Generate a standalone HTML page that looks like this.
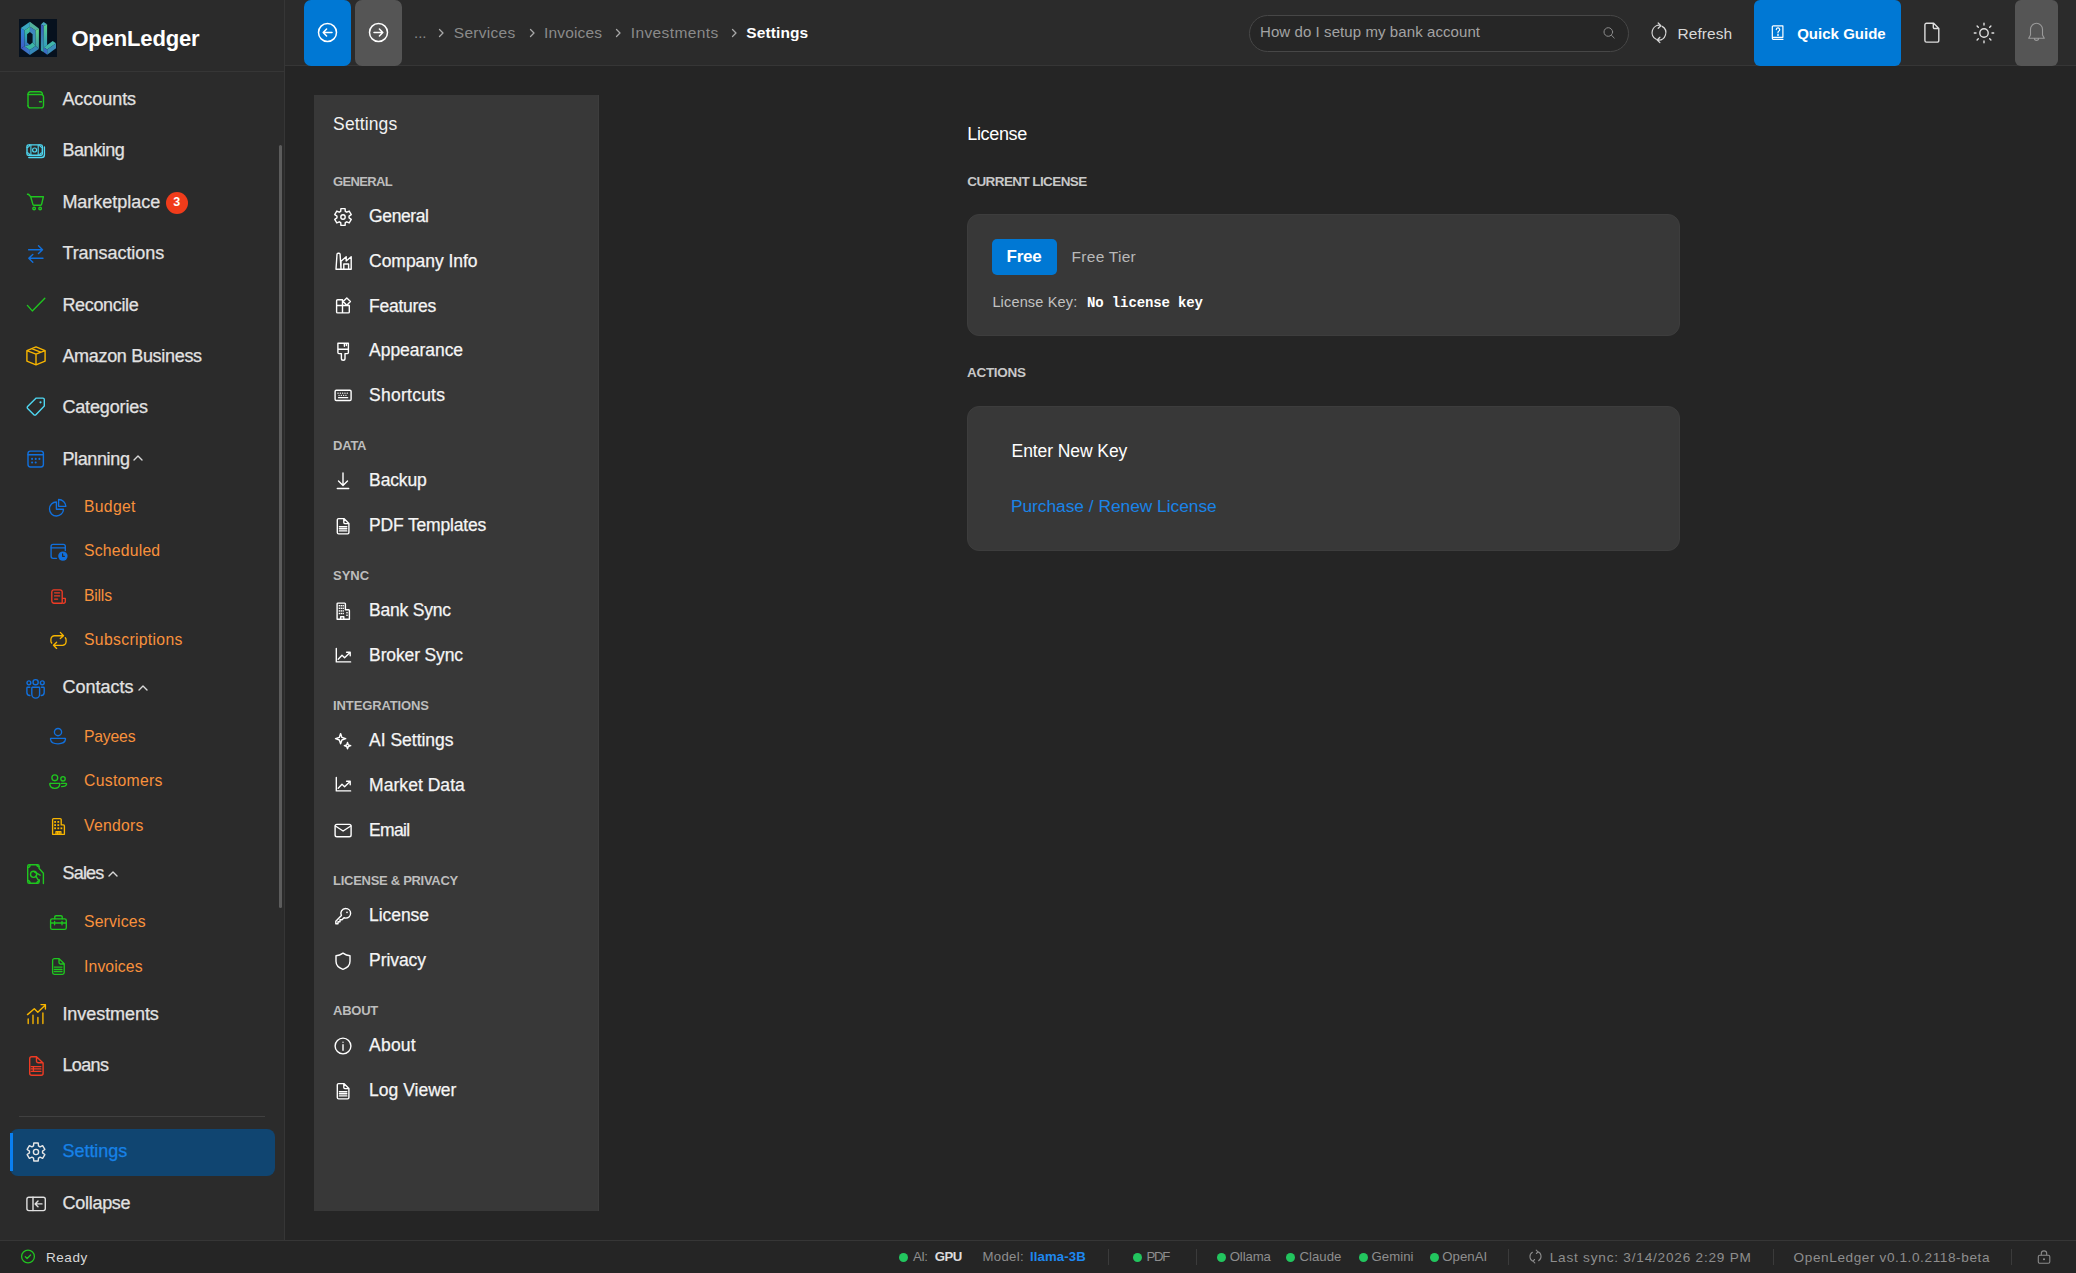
<!DOCTYPE html>
<html><head><meta charset="utf-8"><title>OpenLedger - License</title>
<style>
html,body{margin:0;padding:0;}
body{width:2076px;height:1273px;overflow:hidden;background:#252525;font-family:"Liberation Sans", sans-serif;position:relative;}
.t{position:absolute;white-space:nowrap;}
.r{position:absolute;}
.ic{position:absolute;overflow:visible;}
</style></head><body>
<div class="r" style="left:0px;top:0px;width:284px;height:1240px;background:#2b2b2b;"></div>
<div class="r" style="left:284px;top:0px;width:1px;height:1240px;background:#363636;"></div>
<div class="r" style="left:0px;top:71px;width:284px;height:1px;background:#363636;"></div>
<div class="r" style="left:285px;top:0px;width:1791px;height:65px;background:#2b2b2b;"></div>
<div class="r" style="left:285px;top:65px;width:1791px;height:1px;background:#363636;"></div>
<div class="r" style="left:0px;top:1240px;width:2076px;height:1px;background:#363636;"></div>
<svg class="ic" style="left:19px;top:19px" width="38" height="38" viewBox="0 0 38 38">
<defs>
<linearGradient id="gL1" x1="0" y1="0" x2="0" y2="1"><stop offset="0" stop-color="#2f86d8"/><stop offset="1" stop-color="#3f5ec6"/></linearGradient>
<linearGradient id="gL2" x1="0" y1="0" x2="0" y2="1"><stop offset="0" stop-color="#48c894"/><stop offset="0.5" stop-color="#2fa6b0"/><stop offset="1" stop-color="#3470c4"/></linearGradient>
<linearGradient id="gR1" x1="0" y1="0" x2="0" y2="1"><stop offset="0" stop-color="#62d488"/><stop offset="1" stop-color="#3a98a8"/></linearGradient>
<linearGradient id="gR2" x1="0" y1="0" x2="0" y2="1"><stop offset="0" stop-color="#3f7ec4"/><stop offset="1" stop-color="#3aa0ae"/></linearGradient>
<linearGradient id="gB1" x1="0" y1="0" x2="1" y2="0"><stop offset="0" stop-color="#3f5cc4"/><stop offset="1" stop-color="#3a7cc8"/></linearGradient>
<linearGradient id="gLv1" x1="0" y1="0" x2="0" y2="1"><stop offset="0" stop-color="#3d58c0"/><stop offset="1" stop-color="#35a8a8"/></linearGradient>
<linearGradient id="gLv2" x1="0" y1="0" x2="0" y2="1"><stop offset="0" stop-color="#5cd48a"/><stop offset="1" stop-color="#2e9ac0"/></linearGradient>
</defs>
<rect width="38" height="38" fill="#06111e"/>
<path d="M1.9 9.1 L10.9 2.8 L10.9 7.8 L5.5 11.6 L1.9 9.1 Z" fill="#3aa6c0"/>
<path d="M10.9 2.8 L19.9 9.6 L16.6 11.6 L10.9 7.8 Z" fill="#52b09c"/>
<path d="M1.9 9.1 L5.5 11.6 V27.2 L1.9 29.4 Z" fill="url(#gL1)"/>
<path d="M5.5 11.6 L10.9 7.8 V13.1 L8.1 15.2 V23.6 L10.9 25.7 L5.5 27.2 Z" fill="url(#gL2)"/>
<path d="M10.9 7.8 L16.6 11.6 V27 L13.6 23.6 V15.2 L10.9 13.1 Z" fill="url(#gR2)"/>
<path d="M16.6 11.6 L19.9 9.6 V29.9 L16.6 27 Z" fill="url(#gR1)"/>
<path d="M1.9 29.4 L5.5 27.2 L10.9 31 V36 Z" fill="url(#gB1)"/>
<path d="M5.5 27.2 L10.9 25.7 L13.6 23.6 L16.6 27 L10.9 31 Z" fill="#3cb6a6"/>
<path d="M10.9 31 L16.6 27 L19.9 29.9 L10.9 36 Z" fill="#3588b8"/>
<path d="M21.9 5.5 L24.6 2.9 L28.1 5.2 L24.8 7 Z" fill="#48a8c0"/>
<path d="M21.9 5.5 L24.8 7 V33.2 L21.9 31.5 Z" fill="url(#gLv1)"/>
<path d="M24.8 7 L28.1 5.2 V26.3 L24.8 28.6 Z" fill="url(#gLv2)"/>
<path d="M24.8 28.6 L33.7 22.1 L37 24.3 L28.2 30.6 Z" fill="#40b6aa"/>
<path d="M24.8 28.6 L28.2 30.6 V35.8 L24.8 33.2 Z" fill="#3a6cc4"/>
<path d="M28.2 30.6 L37 24.3 V29.3 L28.2 35.8 Z" fill="#3a8cb8"/>
</svg>
<div class="t" style="left:71.40px;top:28.00px;font-size:22px;line-height:22px;color:#ffffff;font-weight:700;letter-spacing:-0.142px;">OpenLedger</div>
<div class="t" style="left:62.40px;top:90.00px;font-size:18px;line-height:18px;color:#e2e2e2;letter-spacing:-0.046px;-webkit-text-stroke:0.25px currentColor;">Accounts</div>
<svg class="ic" style="left:22px;top:86px" width="28" height="28" viewBox="0 0 28 28" fill="none" stroke="#1fc61f" stroke-width="1.4" stroke-linecap="round" stroke-linejoin="round"><path d="M6 19.8 V8 a2.2 2.2 0 0 1 2.2-2.2 H18.2 a2.2 2.2 0 0 1 2.2 2.2 V8.5"/><path d="M6 8.5 H19.3 a2.2 2.2 0 0 1 2.2 2.2 V19.7 a2.2 2.2 0 0 1-2.2 2.2 H8.2 a2.2 2.2 0 0 1-2.2-2.2"/><path d="M17.5 15.7 H19.4"/></svg>
<div class="t" style="left:62.40px;top:141.00px;font-size:18px;line-height:18px;color:#e2e2e2;letter-spacing:-0.428px;-webkit-text-stroke:0.25px currentColor;">Banking</div>
<svg class="ic" style="left:22px;top:138px" width="28" height="28" viewBox="0 0 28 28" fill="none" stroke="#4fd8f2" stroke-width="1.4" stroke-linecap="round" stroke-linejoin="round"><rect x="5" y="6.9" width="15.3" height="10.4" rx="1.4"/><circle cx="12.6" cy="12" r="2" stroke-width="1.2"/><path d="M5 9.5 A2.5 2.5 0 0 0 7.5 6.9 M17.8 6.9 A2.5 2.5 0 0 0 20.3 9.5 M5 14.7 A2.5 2.5 0 0 1 7.5 17.3 M17.8 17.3 A2.5 2.5 0 0 1 20.3 14.7 M8.9 7 V17.2 M16.2 7 V17.2" stroke-width="1.1"/><path d="M6.8 19.5 H19.6 a2.8 2.8 0 0 0 2.8-2.8 V9"/></svg>
<div class="t" style="left:62.40px;top:193.00px;font-size:18px;line-height:18px;color:#e2e2e2;letter-spacing:-0.026px;-webkit-text-stroke:0.25px currentColor;">Marketplace</div>
<svg class="ic" style="left:22px;top:189px" width="28" height="28" viewBox="0 0 28 28" fill="none" stroke="#1fc61f" stroke-width="1.4" stroke-linecap="round" stroke-linejoin="round"><path d="M5.5 5.3 a1.5 1.5 0 0 1 1.7 0.8 L8.7 7.7 H21.4 L19.6 15.4 a1 1 0 0 1-1 0.8 H11.9 a1 1 0 0 1-1-0.8 L8.7 7.7"/><circle cx="12.1" cy="19.5" r="1.3"/><circle cx="18.1" cy="19.5" r="1.3"/></svg>
<div class="t" style="left:62.40px;top:244.00px;font-size:18px;line-height:18px;color:#e2e2e2;letter-spacing:-0.052px;-webkit-text-stroke:0.25px currentColor;">Transactions</div>
<svg class="ic" style="left:22px;top:240px" width="28" height="28" viewBox="0 0 28 28" fill="none" stroke="#1170dd" stroke-width="1.4" stroke-linecap="round" stroke-linejoin="round"><path d="M6.6 9.7 H20.5 M16.5 5.7 L20.5 9.7 L16.5 13.6 M21 18.3 H6.8 M10.8 14.4 L6.8 18.3 L10.8 22.3"/></svg>
<div class="t" style="left:62.40px;top:296.00px;font-size:18px;line-height:18px;color:#e2e2e2;letter-spacing:-0.333px;-webkit-text-stroke:0.25px currentColor;">Reconcile</div>
<svg class="ic" style="left:22px;top:291px" width="28" height="28" viewBox="0 0 28 28" fill="none" stroke="#1fc61f" stroke-width="1.4" stroke-linecap="round" stroke-linejoin="round"><path d="M5.4 14.4 L10.3 19.9 L22.8 7.2"/></svg>
<div class="t" style="left:62.40px;top:347.00px;font-size:18px;line-height:18px;color:#e2e2e2;letter-spacing:-0.314px;-webkit-text-stroke:0.25px currentColor;">Amazon Business</div>
<svg class="ic" style="left:22px;top:342px" width="28" height="28" viewBox="0 0 28 28" fill="none" stroke="#f7b500" stroke-width="1.4" stroke-linecap="round" stroke-linejoin="round"><path d="M14 4.9 L23.1 8.6 V19.1 L14 22.9 L4.9 19.1 V8.6 Z M4.9 8.6 L14 12.1 L23.1 8.6 M14 12.1 V22.9 M9.6 6.7 L18.7 10.1"/></svg>
<div class="t" style="left:62.40px;top:398.00px;font-size:18px;line-height:18px;color:#e2e2e2;letter-spacing:-0.148px;-webkit-text-stroke:0.25px currentColor;">Categories</div>
<svg class="ic" style="left:22px;top:393px" width="28" height="28" viewBox="0 0 28 28" fill="none" stroke="#4fd8f2" stroke-width="1.4" stroke-linecap="round" stroke-linejoin="round"><path d="M14.2 5.1 H20.9 a1.4 1.4 0 0 1 1.4 1.4 V13.1 L13.9 21.7 a1.4 1.4 0 0 1-2 0 L5.6 15.5 a1.4 1.4 0 0 1 0-2 Z"/><circle cx="18.5" cy="9.3" r="1.1" fill="#4fd8f2" stroke="none"/></svg>
<div class="t" style="left:62.40px;top:450.00px;font-size:18px;line-height:18px;color:#e2e2e2;letter-spacing:-0.366px;-webkit-text-stroke:0.25px currentColor;">Planning</div>
<svg class="ic" style="left:22px;top:444px" width="28" height="28" viewBox="0 0 28 28" fill="none" stroke="#1170dd" stroke-width="1.4" stroke-linecap="round" stroke-linejoin="round"><rect x="6" y="7.1" width="15.4" height="15.9" rx="2.4"/><path d="M6 10.8 H21.4"/><g stroke="none" fill="#1170dd"><circle cx="10.1" cy="14.9" r="1.05"/><circle cx="13.7" cy="14.9" r="1.05"/><circle cx="17.4" cy="14.9" r="1.05"/><circle cx="10.1" cy="18.5" r="1.05"/><circle cx="13.7" cy="18.5" r="1.05"/></g></svg>
<div class="t" style="left:84.00px;top:499.00px;font-size:15.75px;line-height:15.75px;color:#f8913c;letter-spacing:0.294px;">Budget</div>
<svg class="ic" style="left:44px;top:493px" width="28" height="28" viewBox="0 0 28 28" fill="none" stroke="#1170dd" stroke-width="1.35" stroke-linecap="round" stroke-linejoin="round"><path d="M12.4 9 A7 7 0 1 0 19.5 16.2 H12.4 Z"/><path d="M14.6 6.5 V13.3 H21.9 A7.3 7.3 0 0 0 14.6 6.5 Z"/></svg>
<div class="t" style="left:84.00px;top:543.00px;font-size:15.75px;line-height:15.75px;color:#f8913c;letter-spacing:0.21px;">Scheduled</div>
<svg class="ic" style="left:44px;top:537px" width="28" height="28" viewBox="0 0 28 28" fill="none" stroke="#1170dd" stroke-width="1.35" stroke-linecap="round" stroke-linejoin="round"><path d="M12.5 21.3 H9.1 a2 2 0 0 1-2-2 V9.3 a2 2 0 0 1 2-2 H19.3 a2 2 0 0 1 2 2 V13.6"/><path d="M7.1 10.8 H21.3"/><circle cx="18.9" cy="19.1" r="4.7" fill="#1170dd" stroke="none"/><path d="M18.6 16.9 V19.3 H20.4" stroke="#2b2b2b" stroke-width="1.2"/></svg>
<div class="t" style="left:84.00px;top:588.00px;font-size:15.75px;line-height:15.75px;color:#f8913c;letter-spacing:-0.215px;">Bills</div>
<svg class="ic" style="left:44px;top:582px" width="28" height="28" viewBox="0 0 28 28" fill="none" stroke="#ef3b24" stroke-width="1.35" stroke-linecap="round" stroke-linejoin="round"><path d="M18.2 21.2 H10 a2.2 2.2 0 0 1-2.2-2.2 V9.9 a2.1 2.1 0 0 1 2.1-2.1 H16.1 a2.1 2.1 0 0 1 2.1 2.1 Z M18.2 16.4 H21.3 V19.4 a1.8 1.8 0 0 1-1.8 1.8"/><path d="M10.6 10.8 H15.6 M10.6 13.9 H15.6 M10.6 17.1 H13.6"/></svg>
<div class="t" style="left:84.00px;top:632.00px;font-size:15.75px;line-height:15.75px;color:#f8913c;letter-spacing:0.322px;">Subscriptions</div>
<svg class="ic" style="left:44px;top:626px" width="28" height="28" viewBox="0 0 28 28" fill="none" stroke="#f7b500" stroke-width="1.35" stroke-linecap="round" stroke-linejoin="round"><path d="M16.3 6.4 L19.5 9.7 L16.3 12.6 M19.5 9.7 H10.6 a3.7 3.7 0 0 0-3.7 3.7 V14.3 a3.6 3.6 0 0 0 0.8 2.7 M12.6 16.3 L9.5 19.3 L12.6 22.4 M9.5 19.3 H18.4 a3.7 3.7 0 0 0 3.7-3.7 V14.6 a3.6 3.6 0 0 0-0.8-2.8"/></svg>
<div class="t" style="left:62.40px;top:678.00px;font-size:18px;line-height:18px;color:#e2e2e2;letter-spacing:0.021px;-webkit-text-stroke:0.25px currentColor;">Contacts</div>
<svg class="ic" style="left:22px;top:674px" width="28" height="28" viewBox="0 0 28 28" fill="none" stroke="#1170dd" stroke-width="1.4" stroke-linecap="round" stroke-linejoin="round"><circle cx="6.9" cy="8.8" r="1.9"/><circle cx="13.6" cy="8.2" r="2.6"/><circle cx="20.3" cy="8.8" r="1.9"/><path d="M10.3 13.3 H17 a0.6 0.6 0 0 1 0.6 0.6 V20.2 a3.9 3.9 0 0 1-7.8 0 V13.9 a0.6 0.6 0 0 1 0.6-0.6 Z"/><path d="M7.8 13.3 H5.6 a0.7 0.7 0 0 0-0.7 0.7 V18.4 a3.1 3.1 0 0 0 3 3.1 M19.4 13.3 H21.5 a0.7 0.7 0 0 1 0.7 0.7 V18.4 a3.1 3.1 0 0 1-3 3.1"/></svg>
<div class="t" style="left:84.00px;top:729.00px;font-size:15.75px;line-height:15.75px;color:#f8913c;letter-spacing:-0.205px;">Payees</div>
<svg class="ic" style="left:44px;top:722px" width="28" height="28" viewBox="0 0 28 28" fill="none" stroke="#1170dd" stroke-width="1.35" stroke-linecap="round" stroke-linejoin="round"><circle cx="14" cy="10.1" r="3.6"/><path d="M7.3 16.3 H20.7 a0.8 0.8 0 0 1 0.8 0.9 C21.2 19.9 18.3 21.8 14 21.8 C9.7 21.8 6.8 19.9 6.5 17.2 a0.8 0.8 0 0 1 0.8-0.9 Z"/></svg>
<div class="t" style="left:84.00px;top:773.00px;font-size:15.75px;line-height:15.75px;color:#f8913c;letter-spacing:0.294px;">Customers</div>
<svg class="ic" style="left:44px;top:767px" width="28" height="28" viewBox="0 0 28 28" fill="none" stroke="#1fc61f" stroke-width="1.35" stroke-linecap="round" stroke-linejoin="round"><circle cx="10.8" cy="10.8" r="2.9"/><path d="M6.5 16.3 H15.1 a0.7 0.7 0 0 1 0.7 0.8 C15.6 19.6 13.6 21.3 10.8 21.3 C8 21.3 6 19.6 5.8 17.1 a0.7 0.7 0 0 1 0.7-0.8 Z"/><circle cx="19" cy="11.8" r="2.2"/><path d="M17.3 16.4 H22 a0.6 0.6 0 0 1 0.6 0.7 C22.3 18.6 20.9 19.6 17.6 19.6"/></svg>
<div class="t" style="left:84.00px;top:818.00px;font-size:15.75px;line-height:15.75px;color:#f8913c;letter-spacing:0.25px;">Vendors</div>
<svg class="ic" style="left:44px;top:811px" width="28" height="28" viewBox="0 0 28 28" fill="none" stroke="#f7b500" stroke-width="1.35" stroke-linecap="round" stroke-linejoin="round"><path d="M8.6 23.3 V8.6 a1 1 0 0 1 1-1 H16.2 a1 1 0 0 1 1 1 V13.9 H19.4 a1 1 0 0 1 1 1 V23.3 Z"/><path d="M12 23.3 V20.6 H16.9 V23.3 M13.6 20.9 V23.2 M15.2 20.9 V23.2"/><g stroke="none" fill="#f7b500"><rect x="10.2" y="10" width="1.8" height="1.8"/><rect x="13.4" y="10" width="1.8" height="1.8"/><rect x="10.2" y="13.2" width="1.8" height="1.8"/><rect x="13.4" y="13.2" width="1.8" height="1.8"/><rect x="10.2" y="16.4" width="1.8" height="1.8"/><rect x="13.4" y="16.4" width="1.8" height="1.8"/><rect x="16.5" y="16.4" width="1.8" height="1.8"/></g></svg>
<div class="t" style="left:62.40px;top:864.00px;font-size:18px;line-height:18px;color:#e2e2e2;letter-spacing:-0.761px;-webkit-text-stroke:0.25px currentColor;">Sales</div>
<svg class="ic" style="left:22px;top:860px" width="28" height="28" viewBox="0 0 28 28" fill="none" stroke="#1fc61f" stroke-width="1.4" stroke-linecap="round" stroke-linejoin="round"><path d="M17.1 8.6 V6.2 a1.5 1.5 0 0 0-1.5-1.5 H7.2 a1.5 1.5 0 0 0-1.5 1.5 V21.8 a1.5 1.5 0 0 0 1.5 1.5 H15.6 a1.5 1.5 0 0 0 1.5-1.5 V20"/><path d="M5.7 7.6 a2.2 2.2 0 0 0 2.3-2.2 M14.8 4.7 a2.2 2.2 0 0 0 2.3 2.2 M5.7 20.5 a2.2 2.2 0 0 1 2.3 2.5 M14.8 23.3 a2.2 2.2 0 0 1 2.3-2.3"/><circle cx="11.6" cy="14.3" r="3.1"/><path d="M17.6 9 L21.4 13.3 V23.6 M12.3 11.9 L18.1 15.2 M13.9 16.1 L16 19.6 L17.3 20.2"/></svg>
<div class="t" style="left:84.00px;top:914.00px;font-size:15.75px;line-height:15.75px;color:#f8913c;letter-spacing:0.171px;">Services</div>
<svg class="ic" style="left:44px;top:908px" width="28" height="28" viewBox="0 0 28 28" fill="none" stroke="#1fc61f" stroke-width="1.35" stroke-linecap="round" stroke-linejoin="round"><rect x="6.6" y="10.8" width="15.7" height="10.5" rx="1.6"/><path d="M10.8 10.8 V8.9 a1.2 1.2 0 0 1 1.2-1.2 H17 a1.2 1.2 0 0 1 1.2 1.2 V10.8 M6.6 15 H22.3 M10.6 13.4 V16.7 M18 13.4 V16.7"/></svg>
<div class="t" style="left:84.00px;top:959.00px;font-size:15.75px;line-height:15.75px;color:#f8913c;letter-spacing:0.12px;">Invoices</div>
<svg class="ic" style="left:44px;top:952px" width="28" height="28" viewBox="0 0 28 28" fill="none" stroke="#1fc61f" stroke-width="1.35" stroke-linecap="round" stroke-linejoin="round"><path d="M15.1 6.6 H10.4 a1.8 1.8 0 0 0-1.8 1.8 V20.6 a1.8 1.8 0 0 0 1.8 1.8 H18.4 a1.8 1.8 0 0 0 1.8-1.8 V11.8 Z M15 6.7 V10.6 a1.4 1.4 0 0 0 1.4 1.4 H20.1"/><path d="M10.3 15.1 H18 M10.3 17.3 H18 M10.3 19.5 H18"/></svg>
<div class="t" style="left:62.40px;top:1005.00px;font-size:18px;line-height:18px;color:#e2e2e2;letter-spacing:-0.056px;-webkit-text-stroke:0.25px currentColor;">Investments</div>
<svg class="ic" style="left:22px;top:1000px" width="28" height="28" viewBox="0 0 28 28" fill="none" stroke="#f7b500" stroke-width="1.4" stroke-linecap="round" stroke-linejoin="round"><path d="M6.2 19 V23.6 M11 15.2 V23.6 M15.9 17.4 V23.6 M20.9 13 V23.6 M5.5 14.6 L12.3 8.7 L15.8 12.2 L22.3 6 M19 4.6 H23.4 V9"/></svg>
<div class="t" style="left:62.40px;top:1056.00px;font-size:18px;line-height:18px;color:#e2e2e2;letter-spacing:-0.612px;-webkit-text-stroke:0.25px currentColor;">Loans</div>
<svg class="ic" style="left:22px;top:1052px" width="28" height="28" viewBox="0 0 28 28" fill="none" stroke="#ef3b24" stroke-width="1.4" stroke-linecap="round" stroke-linejoin="round"><path d="M14.5 4.7 H9.7 a2 2 0 0 0-2 2 V21.3 a2 2 0 0 0 2 2 H19.1 a2 2 0 0 0 2-2 V11 Z M14.5 4.8 V9 a1.8 1.8 0 0 0 1.8 1.8 H21"/><path d="M9.2 14.6 H18.9 M9.2 16.9 H18.9 M9.2 19.4 H18.9 M11.4 14.6 V19.4" stroke-width="1.3"/></svg>
<svg class="ic" style="left:132px;top:452px" width="12" height="12" viewBox="0 0 12 12" fill="none" stroke="#d9d9d9" stroke-width="1.4" stroke-linecap="round" stroke-linejoin="round"><path d="M2 8 L6 4 L10 8"/></svg>
<svg class="ic" style="left:137px;top:682px" width="12" height="12" viewBox="0 0 12 12" fill="none" stroke="#d9d9d9" stroke-width="1.4" stroke-linecap="round" stroke-linejoin="round"><path d="M2 8 L6 4 L10 8"/></svg>
<svg class="ic" style="left:107px;top:868px" width="12" height="12" viewBox="0 0 12 12" fill="none" stroke="#d9d9d9" stroke-width="1.4" stroke-linecap="round" stroke-linejoin="round"><path d="M2 8 L6 4 L10 8"/></svg>
<div class="r" style="left:166px;top:192px;width:22px;height:22px;border-radius:11px;background:#f03c1b;"></div>
<div class="t" style="left:173.20px;top:196.00px;font-size:12.5px;line-height:12.5px;color:#ffffff;font-weight:700;">3</div>
<div class="r" style="left:279px;top:145px;width:3px;height:763px;background:#5c5c5c;border-radius:2px;"></div>
<div class="r" style="left:19px;top:1116px;width:246px;height:1px;background:#404040;"></div>
<div class="r" style="left:10px;top:1129px;width:264.5px;height:47px;background:#104571;border-radius:8px;"></div>
<div class="r" style="left:10px;top:1133px;width:3px;height:38px;background:#0a7ff0;"></div>
<svg class="ic" style="left:22px;top:1138px" width="28" height="28" viewBox="0 0 28 28" fill="none" stroke="#e6e6e6" stroke-width="1.4" stroke-linecap="round" stroke-linejoin="round"><path d="M11.53 7.88 L11.77 5.07 L16.23 5.07 L16.47 7.88 L18.06 8.80 L20.62 7.61 L22.84 11.46 L20.54 13.08 L20.54 14.92 L22.84 16.54 L20.62 20.39 L18.06 19.20 L16.47 20.12 L16.23 22.93 L11.77 22.93 L11.53 20.12 L9.94 19.20 L7.38 20.39 L5.16 16.54 L7.46 14.92 L7.46 13.08 L5.16 11.46 L7.38 7.61 L9.94 8.80 Z"/><circle cx="14" cy="14" r="2.6"/></svg>
<div class="t" style="left:62.60px;top:1142.00px;font-size:18px;line-height:18px;color:#1782e8;letter-spacing:-0.061px;-webkit-text-stroke:0.25px currentColor;">Settings</div>
<svg class="ic" style="left:22px;top:1190px" width="28" height="28" viewBox="0 0 28 28" fill="none" stroke="#e0e0e0" stroke-width="1.4" stroke-linecap="round" stroke-linejoin="round"><rect x="4.9" y="7.3" width="18.4" height="13.3" rx="2"/><path d="M11 7.3 V20.6 M20 13.9 H13.3 M16 11 L13.1 13.9 L16 16.8"/></svg>
<div class="t" style="left:62.60px;top:1194.00px;font-size:18px;line-height:18px;color:#e2e2e2;letter-spacing:-0.295px;-webkit-text-stroke:0.25px currentColor;">Collapse</div>
<div class="r" style="left:304px;top:0px;width:47px;height:66px;background:#0078d4;border-radius:7px;"></div>
<div class="r" style="left:355px;top:0px;width:47px;height:66px;background:#555555;border-radius:7px;"></div>
<svg class="ic" style="left:317px;top:22px" width="21" height="21" viewBox="0 0 21 21" fill="none" stroke="#ffffff" stroke-width="1.5" stroke-linecap="round" stroke-linejoin="round"><circle cx="10.5" cy="10.5" r="9"/><path d="M15 10.5 H6.3 M9.6 7 L6.2 10.5 L9.6 14"/></svg>
<svg class="ic" style="left:368px;top:22px" width="21" height="21" viewBox="0 0 21 21" fill="none" stroke="#ffffff" stroke-width="1.5" stroke-linecap="round" stroke-linejoin="round"><circle cx="10.5" cy="10.5" r="9"/><path d="M6 10.5 H14.7 M11.4 7 L14.8 10.5 L11.4 14"/></svg>
<div class="t" style="left:414.00px;top:25.00px;font-size:15px;line-height:15px;color:#8a8a8a;">...</div>
<svg class="ic" style="left:437px;top:28px" width="8" height="10" viewBox="0 0 8 10" fill="none" stroke="#a8a8a8" stroke-width="1.3" stroke-linecap="round" stroke-linejoin="round"><path d="M2.5 1.5 L6 5 L2.5 8.5"/></svg>
<div class="t" style="left:453.80px;top:25.00px;font-size:15.5px;line-height:15.5px;color:#8a8a8a;letter-spacing:0.294px;">Services</div>
<svg class="ic" style="left:528px;top:28px" width="8" height="10" viewBox="0 0 8 10" fill="none" stroke="#a8a8a8" stroke-width="1.3" stroke-linecap="round" stroke-linejoin="round"><path d="M2.5 1.5 L6 5 L2.5 8.5"/></svg>
<div class="t" style="left:544.10px;top:25.00px;font-size:15.5px;line-height:15.5px;color:#8a8a8a;letter-spacing:0.136px;">Invoices</div>
<svg class="ic" style="left:614px;top:28px" width="8" height="10" viewBox="0 0 8 10" fill="none" stroke="#a8a8a8" stroke-width="1.3" stroke-linecap="round" stroke-linejoin="round"><path d="M2.5 1.5 L6 5 L2.5 8.5"/></svg>
<div class="t" style="left:630.70px;top:25.00px;font-size:15.5px;line-height:15.5px;color:#8a8a8a;letter-spacing:0.392px;">Investments</div>
<svg class="ic" style="left:730px;top:28px" width="8" height="10" viewBox="0 0 8 10" fill="none" stroke="#a8a8a8" stroke-width="1.3" stroke-linecap="round" stroke-linejoin="round"><path d="M2.5 1.5 L6 5 L2.5 8.5"/></svg>
<div class="t" style="left:746.20px;top:25.00px;font-size:15.5px;line-height:15.5px;color:#ffffff;font-weight:700;letter-spacing:0.122px;">Settings</div>
<div class="r" style="left:1249px;top:14.5px;width:380px;height:37px;background:#262626;border:1px solid #474747;border-radius:19px;box-sizing:border-box;"></div>
<div class="t" style="left:1260.00px;top:24.00px;font-size:15px;line-height:15px;color:#a3a3a3;letter-spacing:0.082px;">How do I setup my bank account</div>
<svg class="ic" style="left:1602px;top:26px" width="14" height="14" viewBox="0 0 14 14" fill="none" stroke="#8c8c8c" stroke-width="1" stroke-linecap="round"><circle cx="6.3" cy="6" r="4.3"/><path d="M9.4 9.2 L12.2 12"/></svg>
<svg class="ic" style="left:1649px;top:22px" width="20" height="22" viewBox="0 0 20 22" fill="none" stroke="#d6d6d6" stroke-width="1.25" stroke-linecap="round" stroke-linejoin="round"><path d="M11.3 3.3 A7.4 7.4 0 0 0 7.2 17.3 M9.2 1 L11.9 3.7 L9.2 6.3 M13.2 4.4 A7.4 7.4 0 0 1 8.6 18.1 M10.9 15.3 L8.2 18 L10.9 20.6"/></svg>
<div class="t" style="left:1677.60px;top:26.00px;font-size:15.5px;line-height:15.5px;color:#d8d8d8;letter-spacing:0.052px;">Refresh</div>
<div class="r" style="left:1754px;top:0px;width:147px;height:66px;background:#0078d4;border-radius:6px;"></div>
<svg class="ic" style="left:1770px;top:24px" width="16" height="17" viewBox="0 0 16 17" fill="none" stroke="#ffffff" stroke-width="1.2" stroke-linecap="round" stroke-linejoin="round"><path d="M2.3 13.3 V2.8 a1 1 0 0 1 1-1 H12.9 V13.3 H3.3 a1 1 0 0 0-1 1 a1 1 0 0 0 1 1 H13"/><path d="M6.3 5.6 a1.7 1.7 0 1 1 2.4 1.6 c-0.5 0.3-0.7 0.6-0.7 1.2 V9"/><circle cx="8" cy="11" r="0.35" fill="#fff"/></svg>
<div class="t" style="left:1797.20px;top:26.00px;font-size:15px;line-height:15px;color:#ffffff;font-weight:700;letter-spacing:0.015px;">Quick Guide</div>
<svg class="ic" style="left:1922px;top:21px" width="20" height="23" viewBox="0 0 20 23" fill="none" stroke="#dedede" stroke-width="1.4" stroke-linejoin="round"><path d="M4.5 2.3 H11.7 L16.8 7.5 V19.5 a1.6 1.6 0 0 1-1.6 1.6 H4.5 a1.6 1.6 0 0 1-1.6-1.6 V3.9 a1.6 1.6 0 0 1 1.6-1.6 Z M11.3 2.5 V6.3 a1.2 1.2 0 0 0 1.2 1.2 H16.5"/></svg>
<svg class="ic" style="left:1972px;top:21px" width="24" height="24" viewBox="0 0 24 24" fill="none" stroke="#e0e0e0" stroke-width="1.4" stroke-linecap="round"><circle cx="12" cy="12" r="4.2"/><path d="M12 2.3 V4 M12 20 V21.7 M2.3 12 H4 M20 12 H21.7 M5.1 5.1 L6.3 6.3 M17.7 17.7 L18.9 18.9 M5.1 18.9 L6.3 17.7 M17.7 6.3 L18.9 5.1"/></svg>
<div class="r" style="left:2015px;top:0px;width:43px;height:66px;background:#555555;border-radius:6px;"></div>
<svg class="ic" style="left:2026px;top:21px" width="21" height="23" viewBox="0 0 21 23" fill="none" stroke="#9a9a9a" stroke-width="1.1" stroke-linejoin="round"><path d="M10.5 2.3 a6 6 0 0 1 6 6 V14 L18.3 17.2 H2.7 L4.5 14 V8.3 a6 6 0 0 1 6-6 Z M8.4 17.3 a2.1 2.1 0 0 0 4.2 0"/></svg>
<div class="r" style="left:314px;top:95px;width:285px;height:1116px;background:#383838;"></div>
<div class="r" style="left:598px;top:95px;width:1px;height:1116px;background:#3d3d3d;"></div>
<div class="t" style="left:333.10px;top:116.00px;font-size:17.5px;line-height:17.5px;color:#f2f2f2;letter-spacing:0.126px;">Settings</div>
<div class="t" style="left:333.10px;top:175.00px;font-size:13px;line-height:13px;color:#bdbdbd;font-weight:700;letter-spacing:-0.662px;">GENERAL</div>
<div class="t" style="left:369.10px;top:208.00px;font-size:17.5px;line-height:17.5px;color:#f5f5f5;letter-spacing:-0.393px;-webkit-text-stroke:0.25px currentColor;">General</div>
<svg class="ic" style="left:329px;top:203px" width="28" height="28" viewBox="0 0 28 28" fill="none" stroke="#ffffff" stroke-width="1.4" stroke-linecap="round" stroke-linejoin="round"><path d="M11.71 8.34 L11.92 5.66 L16.08 5.66 L16.29 8.34 L17.76 9.19 L20.19 8.03 L22.27 11.63 L20.04 13.15 L20.04 14.85 L22.27 16.37 L20.19 19.97 L17.76 18.81 L16.29 19.66 L16.08 22.34 L11.92 22.34 L11.71 19.66 L10.24 18.81 L7.81 19.97 L5.73 16.37 L7.96 14.85 L7.96 13.15 L5.73 11.63 L7.81 8.03 L10.24 9.19 Z"/><circle cx="14" cy="14" r="2.2"/></svg>
<div class="t" style="left:369.10px;top:253.00px;font-size:17.5px;line-height:17.5px;color:#f5f5f5;letter-spacing:-0.049px;-webkit-text-stroke:0.25px currentColor;">Company Info</div>
<svg class="ic" style="left:329px;top:247px" width="28" height="28" viewBox="0 0 28 28" fill="none" stroke="#ffffff" stroke-width="1.4" stroke-linecap="round" stroke-linejoin="round"><path d="M7 22.3 L8 7.2 a1.1 1.1 0 0 1 1.1-1 H10 a1.1 1.1 0 0 1 1.1 1 L12 22.3 Z M12 22.3 V14.2 L17.2 9.8 V14 L22.2 9.8 V22.3 Z M14.8 22.3 V17 H19.6 V22.3"/></svg>
<div class="t" style="left:369.10px;top:298.00px;font-size:17.5px;line-height:17.5px;color:#f5f5f5;letter-spacing:-0.269px;-webkit-text-stroke:0.25px currentColor;">Features</div>
<svg class="ic" style="left:329px;top:292px" width="28" height="28" viewBox="0 0 28 28" fill="none" stroke="#ffffff" stroke-width="1.4" stroke-linecap="round" stroke-linejoin="round"><path d="M7.6 13.5 H13.5 V7.7 H8.6 a1 1 0 0 0-1 1 Z M7.6 13.5 V19.9 a1 1 0 0 0 1 1 H13.5 V13.5 H20.3 V19.9 a1 1 0 0 1-1 1 H13.5 M13.5 13.5 H20.3 M17.8 6 L21.4 9.6 L17.8 13.2 L14.2 9.6 Z"/></svg>
<div class="t" style="left:369.10px;top:342.00px;font-size:17.5px;line-height:17.5px;color:#f5f5f5;letter-spacing:-0.041px;-webkit-text-stroke:0.25px currentColor;">Appearance</div>
<svg class="ic" style="left:329px;top:337px" width="28" height="28" viewBox="0 0 28 28" fill="none" stroke="#ffffff" stroke-width="1.4" stroke-linecap="round" stroke-linejoin="round"><path d="M8.9 6.3 H19.4 V15.6 a1 1 0 0 1-1 1 H16 V21.4 a1.8 1.8 0 0 1-3.6 0 V16.6 H9.9 a1 1 0 0 1-1-1 Z M8.9 12.3 H19.4 M15.4 6.5 V9.2 M17.4 6.5 V8.6"/></svg>
<div class="t" style="left:369.10px;top:387.00px;font-size:17.5px;line-height:17.5px;color:#f5f5f5;letter-spacing:0.245px;-webkit-text-stroke:0.25px currentColor;">Shortcuts</div>
<svg class="ic" style="left:329px;top:381px" width="28" height="28" viewBox="0 0 28 28" fill="none" stroke="#ffffff" stroke-width="1.4" stroke-linecap="round" stroke-linejoin="round"><rect x="6.1" y="9.2" width="16" height="10.3" rx="1.2"/><path d="M9 12.2 H9.1 M11.3 12.2 H11.4 M13.6 12.2 H13.7 M15.9 12.2 H16 M18.2 12.2 H18.3 M10 14.3 H10.1 M12.3 14.3 H12.4 M14.6 14.3 H14.7 M16.9 14.3 H17 M9.5 16.7 H18.7" stroke-width="1.3"/></svg>
<div class="t" style="left:333.10px;top:439.00px;font-size:13px;line-height:13px;color:#bdbdbd;font-weight:700;letter-spacing:-0.263px;">DATA</div>
<div class="t" style="left:369.10px;top:472.00px;font-size:17.5px;line-height:17.5px;color:#f5f5f5;letter-spacing:-0.132px;-webkit-text-stroke:0.25px currentColor;">Backup</div>
<svg class="ic" style="left:329px;top:467px" width="28" height="28" viewBox="0 0 28 28" fill="none" stroke="#ffffff" stroke-width="1.4" stroke-linecap="round" stroke-linejoin="round"><path d="M14 6 V18.3 M9.5 13.9 L14 18.4 L18.5 13.9 M8.3 21.5 H19.7"/></svg>
<div class="t" style="left:369.10px;top:517.00px;font-size:17.5px;line-height:17.5px;color:#f5f5f5;letter-spacing:-0.184px;-webkit-text-stroke:0.25px currentColor;">PDF Templates</div>
<svg class="ic" style="left:329px;top:512px" width="28" height="28" viewBox="0 0 28 28" fill="none" stroke="#ffffff" stroke-width="1.4" stroke-linecap="round" stroke-linejoin="round"><path d="M14.9 6.6 H9.6 a1.3 1.3 0 0 0-1.3 1.3 V20.6 a1.3 1.3 0 0 0 1.3 1.3 H18.6 a1.3 1.3 0 0 0 1.3-1.3 V11.6 Z M14.8 6.7 V10.6 a1 1 0 0 0 1 1 H19.8 M10.4 14.7 H17.8 M10.4 16.8 H17.8 M10.4 18.9 H17.8"/></svg>
<div class="t" style="left:333.10px;top:569.00px;font-size:13px;line-height:13px;color:#bdbdbd;font-weight:700;letter-spacing:-0.036px;">SYNC</div>
<div class="t" style="left:369.10px;top:602.00px;font-size:17.5px;line-height:17.5px;color:#f5f5f5;letter-spacing:-0.231px;-webkit-text-stroke:0.25px currentColor;">Bank Sync</div>
<svg class="ic" style="left:329px;top:598px" width="28" height="28" viewBox="0 0 28 28" fill="none" stroke="#ffffff" stroke-width="1.4" stroke-linecap="round" stroke-linejoin="round"><path d="M8.1 21.3 V5.9 a0.8 0.8 0 0 1 0.8-0.8 H15.6 a0.8 0.8 0 0 1 0.8 0.8 V11.8 H19.6 a0.8 0.8 0 0 1 0.8 0.8 V21.3 Z M11.6 21.3 V18.7 H14.8 V21.3"/><g stroke="none" fill="#ffffff"><rect x="9.7" y="7" width="1.4" height="1.4"/><rect x="11.6" y="7" width="1.4" height="1.4"/><rect x="13.5" y="7" width="1.4" height="1.4"/><rect x="9.7" y="9.6" width="1.4" height="1.4"/><rect x="11.6" y="9.6" width="1.4" height="1.4"/><rect x="13.5" y="9.6" width="1.4" height="1.4"/><rect x="9.7" y="12.2" width="1.4" height="1.4"/><rect x="11.6" y="12.2" width="1.4" height="1.4"/><rect x="13.5" y="12.2" width="1.4" height="1.4"/><rect x="9.7" y="14.8" width="1.4" height="1.4"/><rect x="11.6" y="14.8" width="1.4" height="1.4"/><rect x="13.5" y="14.8" width="1.4" height="1.4"/><rect x="17.3" y="14" width="1.4" height="1.4"/><rect x="17.3" y="16.6" width="1.4" height="1.4"/></g></svg>
<div class="t" style="left:369.10px;top:647.00px;font-size:17.5px;line-height:17.5px;color:#f5f5f5;letter-spacing:-0.133px;-webkit-text-stroke:0.25px currentColor;">Broker Sync</div>
<svg class="ic" style="left:329px;top:642px" width="28" height="28" viewBox="0 0 28 28" fill="none" stroke="#ffffff" stroke-width="1.4" stroke-linecap="round" stroke-linejoin="round"><path d="M7.3 6.5 V19.9 H21.6 M9.2 17.2 L13 13.3 L15.6 15.8 L21 10.4 M17.6 10.2 H21.2 V13.8"/></svg>
<div class="t" style="left:333.10px;top:699.00px;font-size:13px;line-height:13px;color:#bdbdbd;font-weight:700;letter-spacing:-0.125px;">INTEGRATIONS</div>
<div class="t" style="left:369.10px;top:732.00px;font-size:17.5px;line-height:17.5px;color:#f5f5f5;letter-spacing:-0.021px;-webkit-text-stroke:0.25px currentColor;">AI Settings</div>
<svg class="ic" style="left:329px;top:727px" width="28" height="28" viewBox="0 0 28 28" fill="none" stroke="#ffffff" stroke-width="1.4" stroke-linecap="round" stroke-linejoin="round"><path d="M11.6 6.6 L12.9 10.4 L16.7 11.7 L12.9 13 L11.6 16.8 L10.3 13 L6.5 11.7 L10.3 10.4 Z M18.5 15.5 L19.3 17.9 L21.7 18.7 L19.3 19.5 L18.5 21.9 L17.7 19.5 L15.3 18.7 L17.7 17.9 Z"/></svg>
<div class="t" style="left:369.10px;top:777.00px;font-size:17.5px;line-height:17.5px;color:#f5f5f5;letter-spacing:0.037px;-webkit-text-stroke:0.25px currentColor;">Market Data</div>
<svg class="ic" style="left:329px;top:771px" width="28" height="28" viewBox="0 0 28 28" fill="none" stroke="#ffffff" stroke-width="1.4" stroke-linecap="round" stroke-linejoin="round"><path d="M7.3 6.5 V19.9 H21.6 M9.2 17.2 L13 13.3 L15.6 15.8 L21 10.4 M17.6 10.2 H21.2 V13.8"/></svg>
<div class="t" style="left:369.10px;top:822.00px;font-size:17.5px;line-height:17.5px;color:#f5f5f5;letter-spacing:-0.662px;-webkit-text-stroke:0.25px currentColor;">Email</div>
<svg class="ic" style="left:329px;top:816px" width="28" height="28" viewBox="0 0 28 28" fill="none" stroke="#ffffff" stroke-width="1.4" stroke-linecap="round" stroke-linejoin="round"><rect x="6.1" y="8.4" width="16" height="12.4" rx="1.8"/><path d="M6.4 10 L14.1 15 L21.8 10"/></svg>
<div class="t" style="left:333.10px;top:874.00px;font-size:13px;line-height:13px;color:#bdbdbd;font-weight:700;letter-spacing:-0.292px;">LICENSE &amp; PRIVACY</div>
<div class="t" style="left:369.10px;top:907.00px;font-size:17.5px;line-height:17.5px;color:#f5f5f5;letter-spacing:-0.072px;-webkit-text-stroke:0.25px currentColor;">License</div>
<svg class="ic" style="left:329px;top:902px" width="28" height="28" viewBox="0 0 28 28" fill="none" stroke="#ffffff" stroke-width="1.4" stroke-linecap="round" stroke-linejoin="round"><path d="M16.8 6.5 a4.8 4.8 0 0 1 0 9.6 a4.9 4.9 0 0 1-1.8-0.35 L13 17.8 H11 V19.8 H9 V21.8 H6.8 V19.3 L12.4 13.6 a4.8 4.8 0 0 1 4.4-7.1 Z"/><circle cx="18" cy="10.3" r="0.9" fill="#f0f0f0" stroke="none"/></svg>
<div class="t" style="left:369.10px;top:952.00px;font-size:17.5px;line-height:17.5px;color:#f5f5f5;letter-spacing:-0.076px;-webkit-text-stroke:0.25px currentColor;">Privacy</div>
<svg class="ic" style="left:329px;top:947px" width="28" height="28" viewBox="0 0 28 28" fill="none" stroke="#ffffff" stroke-width="1.4" stroke-linecap="round" stroke-linejoin="round"><path d="M14 6.1 C16.3 7.8 18.4 8.6 21 8.7 V14.3 C21 18.3 18.2 20.9 14 22.3 C9.8 20.9 7 18.3 7 14.3 V8.7 C9.6 8.6 11.7 7.8 14 6.1 Z"/></svg>
<div class="t" style="left:333.10px;top:1004.00px;font-size:13px;line-height:13px;color:#bdbdbd;font-weight:700;letter-spacing:-0.279px;">ABOUT</div>
<div class="t" style="left:369.10px;top:1037.00px;font-size:17.5px;line-height:17.5px;color:#f5f5f5;letter-spacing:0.195px;-webkit-text-stroke:0.25px currentColor;">About</div>
<svg class="ic" style="left:329px;top:1032px" width="28" height="28" viewBox="0 0 28 28" fill="none" stroke="#ffffff" stroke-width="1.4" stroke-linecap="round" stroke-linejoin="round"><circle cx="14" cy="14" r="7.9"/><path d="M14 12.8 V18.2"/><circle cx="14" cy="10.2" r="0.7" fill="#f0f0f0" stroke="none"/></svg>
<div class="t" style="left:369.10px;top:1082.00px;font-size:17.5px;line-height:17.5px;color:#f5f5f5;letter-spacing:0.007px;-webkit-text-stroke:0.25px currentColor;">Log Viewer</div>
<svg class="ic" style="left:329px;top:1077px" width="28" height="28" viewBox="0 0 28 28" fill="none" stroke="#ffffff" stroke-width="1.4" stroke-linecap="round" stroke-linejoin="round"><path d="M14.9 6.6 H9.6 a1.3 1.3 0 0 0-1.3 1.3 V20.6 a1.3 1.3 0 0 0 1.3 1.3 H18.6 a1.3 1.3 0 0 0 1.3-1.3 V11.6 Z M14.8 6.7 V10.6 a1 1 0 0 0 1 1 H19.8 M10.4 14.7 H17.8 M10.4 16.8 H17.8 M10.4 18.9 H17.8"/></svg>
<div class="t" style="left:967.30px;top:125.00px;font-size:18px;line-height:18px;color:#ffffff;letter-spacing:-0.342px;">License</div>
<div class="t" style="left:967.30px;top:175.00px;font-size:13.5px;line-height:13.5px;color:#c8c8c8;font-weight:700;letter-spacing:-0.596px;">CURRENT LICENSE</div>
<div class="r" style="left:967px;top:214px;width:713px;height:122px;background:#383838;border-radius:12px;border:1px solid #3d3d3d;box-sizing:border-box;"></div>
<div class="r" style="left:992px;top:238.6px;width:65px;height:36px;background:#0078d4;border-radius:5px;"></div>
<div class="t" style="left:1006.50px;top:248.00px;font-size:17px;line-height:17px;color:#ffffff;font-weight:700;letter-spacing:-0.204px;">Free</div>
<div class="t" style="left:1071.60px;top:249.00px;font-size:15.5px;line-height:15.5px;color:#b8b8b8;letter-spacing:0.262px;">Free Tier</div>
<div class="t" style="left:992.40px;top:295.00px;font-size:14.5px;line-height:14.5px;color:#c2c2c2;letter-spacing:0.162px;">License Key:</div>
<div class="t" style="left:1087.00px;top:296.00px;font-size:14px;line-height:14px;color:#ffffff;font-weight:700;letter-spacing:-0.126px;font-family:'Liberation Mono', monospace;">No license key</div>
<div class="t" style="left:967.10px;top:366.00px;font-size:13.5px;line-height:13.5px;color:#c8c8c8;font-weight:700;letter-spacing:-0.325px;">ACTIONS</div>
<div class="r" style="left:967px;top:406px;width:713px;height:145px;background:#383838;border-radius:12px;border:1px solid #3d3d3d;box-sizing:border-box;"></div>
<div class="t" style="left:1011.60px;top:443.00px;font-size:17.5px;line-height:17.5px;color:#ffffff;letter-spacing:-0.085px;">Enter New Key</div>
<div class="t" style="left:1010.90px;top:498.00px;font-size:17.3px;line-height:17.3px;color:#1a84e8;letter-spacing:0.009px;">Purchase / Renew License</div>
<svg class="ic" style="left:20px;top:1249px" width="16" height="16" viewBox="0 0 16 16" fill="none" stroke="#22c322" stroke-width="1.3" stroke-linecap="round" stroke-linejoin="round"><circle cx="8" cy="7.5" r="6.4"/><path d="M5.3 7.8 L7.1 9.5 L10.6 6"/></svg>
<div class="t" style="left:46.00px;top:1251.00px;font-size:13.5px;line-height:13.5px;color:#d8d8d8;letter-spacing:0.546px;">Ready</div>
<div class="r" style="left:899px;top:1252.5px;width:9px;height:9px;background:#22c55e;border-radius:50%;"></div>
<div class="t" style="left:913.00px;top:1250.00px;font-size:13.2px;line-height:13.2px;color:#8e8e8e;letter-spacing:-0.568px;">AI:</div>
<div class="t" style="left:934.80px;top:1250.00px;font-size:13.2px;line-height:13.2px;color:#dcdcdc;font-weight:700;letter-spacing:-0.556px;">GPU</div>
<div class="t" style="left:982.50px;top:1250.00px;font-size:13.2px;line-height:13.2px;color:#8e8e8e;letter-spacing:0.313px;">Model:</div>
<div class="t" style="left:1029.90px;top:1250.00px;font-size:13.2px;line-height:13.2px;color:#1e88f0;font-weight:700;letter-spacing:0.127px;">llama-3B</div>
<div class="r" style="left:1108px;top:1249px;width:1px;height:16px;background:#3b3b3b;"></div>
<div class="r" style="left:1133px;top:1252.5px;width:9px;height:9px;background:#22c55e;border-radius:50%;"></div>
<div class="t" style="left:1146.50px;top:1250.00px;font-size:13.2px;line-height:13.2px;color:#8e8e8e;letter-spacing:-1.3px;">PDF</div>
<div class="r" style="left:1196px;top:1249px;width:1px;height:16px;background:#3b3b3b;"></div>
<div class="r" style="left:1217px;top:1252.5px;width:9px;height:9px;background:#22c55e;border-radius:50%;"></div>
<div class="t" style="left:1229.70px;top:1250.00px;font-size:13.2px;line-height:13.2px;color:#8e8e8e;letter-spacing:-0.109px;">Ollama</div>
<div class="r" style="left:1286px;top:1252.5px;width:9px;height:9px;background:#22c55e;border-radius:50%;"></div>
<div class="t" style="left:1299.40px;top:1250.00px;font-size:13.2px;line-height:13.2px;color:#8e8e8e;letter-spacing:0.051px;">Claude</div>
<div class="r" style="left:1358.5px;top:1252.5px;width:9px;height:9px;background:#22c55e;border-radius:50%;"></div>
<div class="t" style="left:1371.40px;top:1250.00px;font-size:13.2px;line-height:13.2px;color:#8e8e8e;letter-spacing:0.078px;">Gemini</div>
<div class="r" style="left:1429.5px;top:1252.5px;width:9px;height:9px;background:#22c55e;border-radius:50%;"></div>
<div class="t" style="left:1442.20px;top:1250.00px;font-size:13.2px;line-height:13.2px;color:#8e8e8e;letter-spacing:0.07px;">OpenAI</div>
<div class="r" style="left:1508px;top:1249px;width:1px;height:16px;background:#3b3b3b;"></div>
<svg class="ic" style="left:1528px;top:1249px" width="15" height="15" viewBox="0 0 15 15" fill="none" stroke="#8a8a8a" stroke-width="1.1" stroke-linecap="round" stroke-linejoin="round"><path d="M4.4 3.3 A5 5 0 0 0 5 12.2 M10.6 11.7 A5 5 0 0 0 10 2.8 M8.2 1.2 L10 2.8 L8.4 4.5 M6.8 13.8 L5 12.2 L6.6 10.5"/></svg>
<div class="t" style="left:1549.70px;top:1251.00px;font-size:13.6px;line-height:13.6px;color:#8e8e8e;letter-spacing:0.792px;">Last sync: 3/14/2026 2:29 PM</div>
<div class="r" style="left:1773px;top:1249px;width:1px;height:16px;background:#3b3b3b;"></div>
<div class="t" style="left:1793.60px;top:1251.00px;font-size:13.6px;line-height:13.6px;color:#8e8e8e;letter-spacing:0.596px;">OpenLedger v0.1.0.2118-beta</div>
<div class="r" style="left:2011px;top:1249px;width:1px;height:16px;background:#3b3b3b;"></div>
<svg class="ic" style="left:2036px;top:1249px" width="17" height="16" viewBox="0 0 17 16" fill="none" stroke="#8a8a8a" stroke-width="1.1" stroke-linejoin="round"><rect x="2.3" y="6.3" width="11.5" height="8" rx="1.5"/><path d="M5.3 6.3 V4.6 a2.7 2.7 0 0 1 5.4 0 V6.3"/><circle cx="8" cy="10.3" r="0.5" fill="#8a8a8a"/></svg>
</body></html>
